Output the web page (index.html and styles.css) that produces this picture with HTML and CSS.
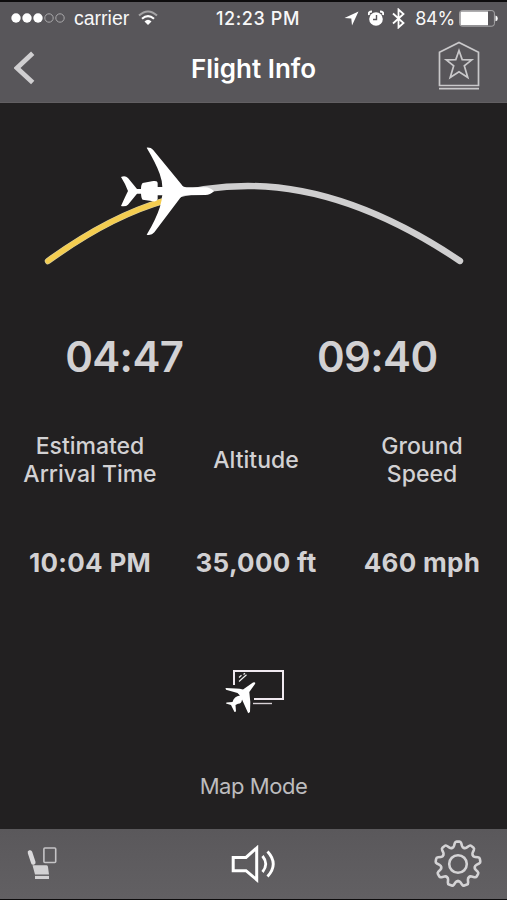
FILE: index.html
```
<!DOCTYPE html>
<html lang="en">
<head>
<meta charset="utf-8">
<title>Flight Info</title>
<link rel="stylesheet" href="styles.css">
</head>
<body>
<div class="app">
  <header class="header">
    <div class="status">
      <div class="status-left">
        <svg class="signal" width="54" height="12" viewBox="0 0 54 12"><g fill="#fff"><circle cx="5" cy="6" r="4.7"/><circle cx="16" cy="6" r="4.7"/><circle cx="27" cy="6" r="4.7"/></g><g fill="none" stroke="#a9a8aa"><circle cx="38" cy="6" r="4.2"/><circle cx="49" cy="6" r="4.2"/></g></svg>
        <span class="carrier">carrier</span>
        <svg class="wifi" width="20" height="16" viewBox="0 0 20 16" fill="none"><path d="M1 5.6Q10-2.6 19 5.6" stroke="#a5a4a6" stroke-width="2"/><path d="M4 8.8Q10 3.4 16 8.8" stroke="#fff" stroke-width="2.1"/><path d="M6.5 11.4Q10 8.3 13.5 11.4L10 15Z" fill="#fff"/></svg>
      </div>
      <span class="clock">12:23 PM</span>
      <div class="status-right">
        <svg width="15" height="15" viewBox="0 0 15 15"><path d="M14.5.5 8 14.5 7.3 7.6.5 7Z" fill="#fff"/></svg>
        <svg class="alarm" width="16" height="17" viewBox="0 0 16 17"><circle cx="8" cy="9" r="6.8" fill="#fff"/><path d="M1 5Q0 1.5 4 1.5M15 5Q16 1.5 12 1.5" fill="none" stroke="#fff" stroke-width="2"/><path d="M8.5 5V9.5H5" fill="none" stroke="#58565a" stroke-width="1.4"/></svg>
        <svg class="bluetooth" width="13" height="21" viewBox="0 0 13 21"><path d="M1 5.5 11.5 15 6.5 19.5V1.5L11.5 6 1 15.5" fill="none" stroke="#fff" stroke-width="1.8"/></svg>
        <span class="percent">84%</span>
        <svg class="battery" width="39" height="17" viewBox="0 0 39 17"><rect x=".6" y=".6" width="34.8" height="15.6" rx="2.5" fill="none" stroke="#a9a8aa"/><path d="M2.5 1.5H29V15.3H2.5Q1.5 15.3 1.5 14V3Q1.5 1.5 2.5 1.5ZM36.5 5.5Q38.8 6 38.8 8.4T36.5 11.3Z" fill="#fff"/></svg>
      </div>
    </div>
    <nav class="titlebar">
      <svg class="back" width="22" height="34" viewBox="0 0 22 34"><path d="M18.7 2.2 3 17 18.7 31.5" fill="none" stroke="#d0cfd1" stroke-width="4.8"/></svg>
      <h1 class="title">Flight Info</h1>
      <svg class="badge" width="42" height="50" viewBox="0 0 42 50" fill="none" stroke="#c9c8ca" stroke-width="1.7"><path d="M1.5 11.3 21 1.5 40.5 11.3V44.5H1.5ZM1 47.7H41"/><path d="M21 9.5 24.2 18.6 33.8 18.8 26.3 24.8 29.8 36.5 21 30.7 12.2 36.5 15.7 24.8 8.2 18.8 17.8 18.6Z"/></svg>
    </nav>
  </header>

  <main class="main">
    <svg class="route" width="507" height="160" viewBox="0 120 507 160">
      <g fill="none" stroke-width="6.4" stroke-linecap="round">
        <path d="M165 198Q205 186 248 186C320 186 390 214 460 261" stroke="#cfcecf"/>
        <path d="M48 261C88 232 128 211 165 200.5" stroke="#d9cd9a"/>
        <path d="M48 261C88 232 128 211 165 200.5" stroke="#f4cd50" stroke-width="5"/>
      </g>
      <path transform="translate(30 135) scale(.33333)" fill="#fff" d="M350 38Q363 37 369 44L454 148Q458 157 470 157L527 157Q541 158 552 169Q541 180 526 180L468 181Q456 181 450 190L373 292Q365 302 350 299Q378 253 390 215Q396 195 397 181H383V193Q379 201 370 199L338 194Q334 191 333 176H321L294 209Q288 215 273 213Q286 184 294 168Q287 148 273 126Q286 121 294 129L321 162H333Q333 148 338 144L370 138Q383 136 383 145V156H397Q397 138 389 116Q378 85 350 38Z"/>
    </svg>

    <div class="times">
      <span class="elapsed">04:47</span>
      <span class="remaining">09:40</span>
    </div>

    <dl class="stats">
      <div class="stat"><dt>Estimated<br>Arrival Time</dt><dd>10:04 PM</dd></div>
      <div class="stat"><dt class="alt">Altitude</dt><dd>35,000 ft</dd></div>
      <div class="stat"><dt>Ground<br>Speed</dt><dd>460 mph</dd></div>
    </dl>

    <div class="mapmode">
      <svg width="64" height="50" viewBox="0 0 64 50">
        <path d="M12 17V3H61V31H32" fill="none" stroke="#f0e9ef" stroke-width="2"/>
        <path d="M31 35.5H50" stroke="#d8d2d7" stroke-width="1.4"/>
        <path d="M17 9.5 19.5 7.2M21.5 6.5 23 5.2M17 13.5 24.5 6.8" fill="none" stroke="#eee" stroke-width="1.2"/>
        <path fill="#fff" d="M3.5 20Q15 20 21 21.5L31 14.5Q34 13.5 33 16L27.3 24Q29 34 28 44L26.2 45.3 20 31.5Q19.5 36 16 35.8L13.5 37 14 43.5 12.5 44 9 37 4 35.5 4.5 34.5 10.5 34Q12 28.5 18 27.6L15.5 25 4 21.8Z"/>
      </svg>
      <span class="maplabel">Map Mode</span>
    </div>
  </main>

  <footer class="footer">
    <svg class="seat" width="30" height="34" viewBox="0 0 30 34"><path d="M3 5.5 6.3 15.5" stroke="#dad9db" stroke-width="4.6" stroke-linecap="round"/><path d="M5.5 18.3H19.5Q21 18.3 21 20L22 27.5H8Z" fill="#d2d1d3"/><path d="M8 28.9H22V32H8Z" fill="#d2d1d3"/><rect x="16.9" y="1" width="11.8" height="14.5" rx="1" fill="none" stroke="#c5c4c6" stroke-width="1.6"/></svg>
    <svg class="sound" width="46" height="38" viewBox="0 0 46 38" fill="none" stroke="#fff" stroke-width="3"><path d="M2.2 12.4H15L25.7 3V34.7L15 25.7H2.2Z"/><path d="M31.5 11Q38 19 31.5 27M36.5 6.5Q48 19 36.5 31.5" stroke-width="2.8"/></svg>
    <svg class="gear" width="50" height="50" viewBox="-25 -25 50 50" fill="none" stroke="#d4d3d5" stroke-width="2.6" stroke-linecap="round" stroke-linejoin="round">
      <defs><path id="tooth" d="M-5.85-16.1Q-4.5-16.3-4-18L-3.2-20.8Q-2.7-22.4-1.5-22.4H1.5Q2.7-22.4 3.2-20.8L4-18Q4.5-16.3 5.85-16.1"/></defs>
      <use href="#tooth"/><use href="#tooth" transform="rotate(40)"/><use href="#tooth" transform="rotate(80)"/><use href="#tooth" transform="rotate(120)"/><use href="#tooth" transform="rotate(160)"/><use href="#tooth" transform="rotate(200)"/><use href="#tooth" transform="rotate(240)"/><use href="#tooth" transform="rotate(280)"/><use href="#tooth" transform="rotate(320)"/>
      <circle r="8.8"/>
    </svg>
  </footer>
</div>
</body>
</html>
```
FILE: styles.css
```
* { box-sizing: border-box; margin: 0; padding: 0; }
body { background: #0d0c0d; font-family: Inter, "Liberation Sans", sans-serif; color: #d2d1d3; }
svg { display: block; flex: none; }
.app { width: 507px; height: 900px; display: flex; flex-direction: column; padding: 2px 0 1px; background: #0d0c0d; overflow: hidden; }
.header { height: 101px; background: #58565a; border-bottom: 1px solid #625f62; }
.status { height: 32px; display: grid; grid-template-columns: 200px 1fr 200px; align-items: center; color: #f8f8f8; white-space: nowrap; }
.status-left { display: flex; align-items: center; padding-left: 11px; }
.carrier { font: 19.5px/24px "Liberation Sans", sans-serif; margin-left: 9px; }
.wifi { margin-left: 9px; }
.clock { font-size: 18px; font-weight: 550; text-align: center; letter-spacing: .6px; padding-left: 9px; }
.status-right { display: flex; align-items: center; justify-content: flex-end; padding-right: 9px; }
.alarm { margin-left: 9px; }
.bluetooth { margin-left: 8px; }
.percent { font-size: 18px; margin-left: 10px; letter-spacing: -.2px; }
.battery { margin-left: 4px; }
.titlebar { height: 68px; display: grid; grid-template-columns: 100px 1fr 100px; align-items: center; }
.back { margin-left: 14px; }
.title { font-size: 26px; font-weight: 600; text-align: center; color: #fff; }
.badge { justify-self: end; margin-right: 27px; margin-top: -4px; }
.main { height: 726px; background: #222021; display: flex; flex-direction: column; }
.route { margin-top: 17px; }
.times { display: grid; grid-template-columns: 1fr 1fr; margin-top: 52px; height: 50px; line-height: 50px; font-size: 42px; font-weight: 600; letter-spacing: -.6px; text-align: center; }
.elapsed { padding-right: 5px; }
.remaining { padding-right: 6px; }
.stats { display: grid; grid-template-columns: 180px 152px 180px; width: 512px; margin-top: 50px; text-align: center; white-space: nowrap; }
.stat dt { height: 56px; font-size: 23px; line-height: 28px; font-weight: 450; }
.stat .alt { line-height: 56px; }
.stat dd { margin-top: 59px; font-size: 26px; line-height: 32px; font-weight: 650; letter-spacing: .3px; }
.mapmode { display: flex; flex-direction: column; align-items: center; margin-top: 89px; }
.maplabel { font-size: 22px; line-height: 28px; margin-top: 54px; color: #bdbcbe; letter-spacing: -.45px; }
.footer { height: 70px; background: linear-gradient(#5a585b, #626063); display: grid; grid-template-columns: 1fr 46px 1fr; align-items: center; }
.seat { margin-left: 27px; }
.gear { justify-self: end; margin-right: 24px; }
```
